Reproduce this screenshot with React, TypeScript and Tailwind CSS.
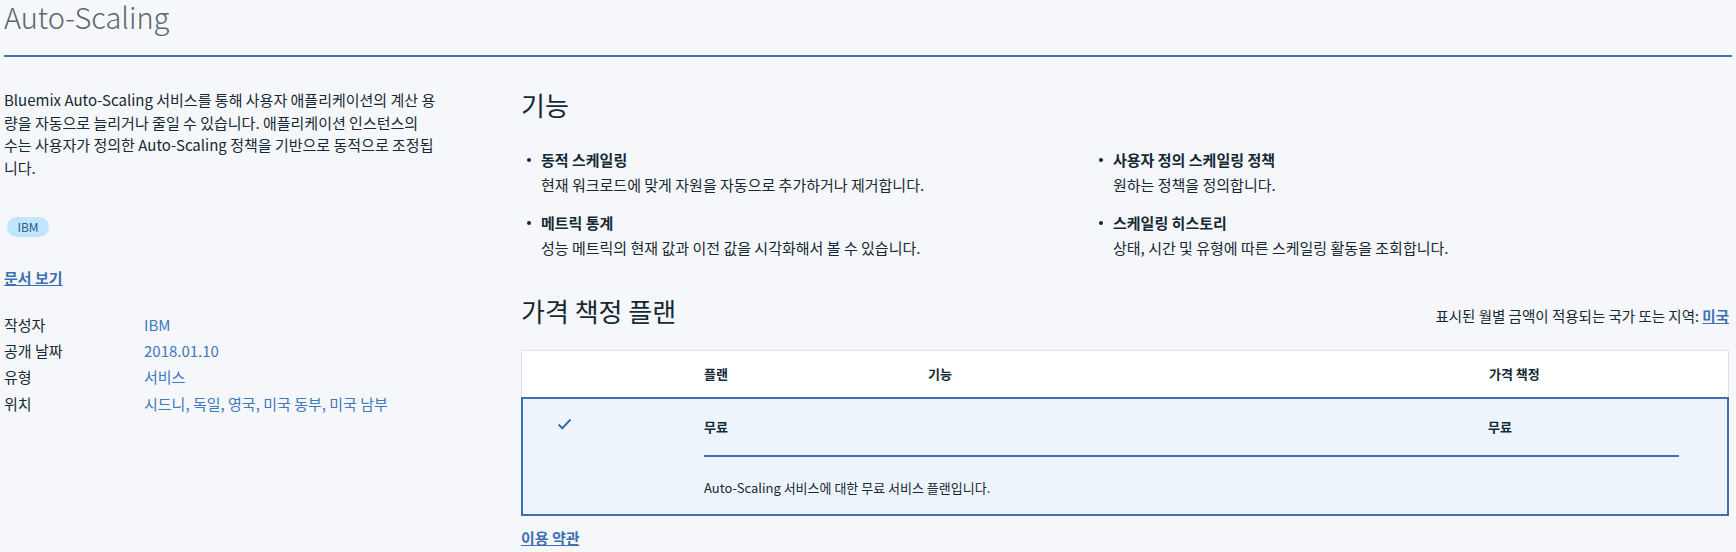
const features = [
  { title: "동적 스케일링", desc: "현재 워크로드에 맞게 자원을 자동으로 추가하거나 제거합니다." },
  { title: "사용자 정의 스케일링 정책", desc: "원하는 정책을 정의합니다." },
  { title: "메트릭 통계", desc: "성능 메트릭의 현재 값과 이전 값을 시각화해서 볼 수 있습니다." },
  { title: "스케일링 히스토리", desc: "상태, 시간 및 유형에 따른 스케일링 활동을 조회합니다." },
];

const meta = [
  ["작성자", "IBM"],
  ["공개 날짜", "2018.01.10"],
  ["유형", "서비스"],
  ["위치", "시드니, 독일, 영국, 미국 동부, 미국 남부"],
];

export default function App() {
  return (
    <div className="min-h-[552px] w-[1736px] bg-[#f5f7fa] px-[4px] font-['Noto_Sans_CJK_KR','Noto_Sans',sans-serif] text-[#152935]">
      <h1 className="h-[57px] border-b-2 border-[#3d70b2] text-[29px] font-light leading-[32px] text-[#5a6872]">
        Auto-Scaling
      </h1>

      <div className="flex pt-[32px]">
        {/* Left column */}
        <div className="w-[436px] shrink-0">
          <p className="whitespace-nowrap text-[15px] leading-[22.7px]">
            Bluemix Auto-Scaling 서비스를 통해 사용자 애플리케이션의 계산 용<br />
            량을 자동으로 늘리거나 줄일 수 있습니다. 애플리케이션 인스턴스의<br />
            수는 사용자가 정의한 Auto-Scaling 정책을 기반으로 동적으로 조정됩<br />
            니다.
          </p>
          <div className="ml-[3px] mt-[37px] flex h-[20px] w-[42px] items-center justify-center rounded-full bg-[#c0e6ff] text-[12px] text-[#325c80]">
            IBM
          </div>
          <a href="#" className="mt-[31px] block w-fit text-[15px] font-semibold leading-[20px] text-[#3d70b2] underline">
            문서 보기
          </a>
          <div className="mt-[24px] text-[15px]">
            {meta.map(([k, v]) => (
              <div key={k} className="flex h-[26.33px] items-center">
                <span className="w-[140px]">{k}</span>
                <span className="text-[#4178be]">{v}</span>
              </div>
            ))}
          </div>
        </div>

        {/* Right column */}
        <div className="ml-[81px] mr-[3px] flex-1">
          <h2 className="text-[26px] leading-[32px]">기능</h2>
          <ul className="mt-[28px] grid grid-cols-[572px_1fr] gap-y-[16px] text-[15px]">
            {features.map((f) => (
              <li key={f.title} className="flex">
                <span className="ml-[6px] mt-[9px] h-[4px] w-[4px] shrink-0 rounded-full bg-[#152935]" />
                <div className="ml-[10px]">
                  <div className="font-semibold leading-[22px]">{f.title}</div>
                  <div className="mt-[3px] leading-[22px]">{f.desc}</div>
                </div>
              </li>
            ))}
          </ul>

          <div className="mt-[36px] flex items-baseline justify-between">
            <h2 className="text-[26px] leading-[32px]">가격 책정 플랜</h2>
            <p className="text-[14.5px]">
              표시된 월별 금액이 적용되는 국가 또는 지역:{" "}
              <a href="#" className="font-semibold text-[#3d70b2] underline">미국</a>
            </p>
          </div>

          <div className="mt-[23px]">
            <div className="grid h-[47px] grid-cols-[182px_224px_1fr_239px] items-center border border-b-0 border-[#dfe3e6] bg-white text-[13px] font-semibold">
              <span />
              <span>플랜</span>
              <span>기능</span>
              <span>가격 책정</span>
            </div>
            <div className="h-[119px] border-2 border-[#3d70b2] bg-[#edf4fc] text-[13px]">
              <div className="grid h-[56px] grid-cols-[181px_224px_1fr_239px] items-center">
                <span className="ml-[34px] -mt-[6px]">
                  <svg width="15" height="12" viewBox="0 0 15 12" fill="none">
                    <path d="M1.5 6.5l3.8 3.8L13.5 1.5" stroke="#3d70b2" strokeWidth="2" />
                  </svg>
                </span>
                <span className="font-semibold">무료</span>
                <span />
                <span className="font-semibold">무료</span>
              </div>
              <div className="ml-[181px] mr-[48px] h-[2px] bg-[#3d70b2]" />
              <p className="ml-[181px] mt-[22px] leading-[18px]">
                Auto-Scaling 서비스에 대한 무료 서비스 플랜입니다.
              </p>
            </div>
          </div>

          <a href="#" className="mt-[12px] block w-fit text-[15px] font-semibold leading-[20px] text-[#3d70b2] underline">
            이용 약관
          </a>
        </div>
      </div>
    </div>
  );
}
